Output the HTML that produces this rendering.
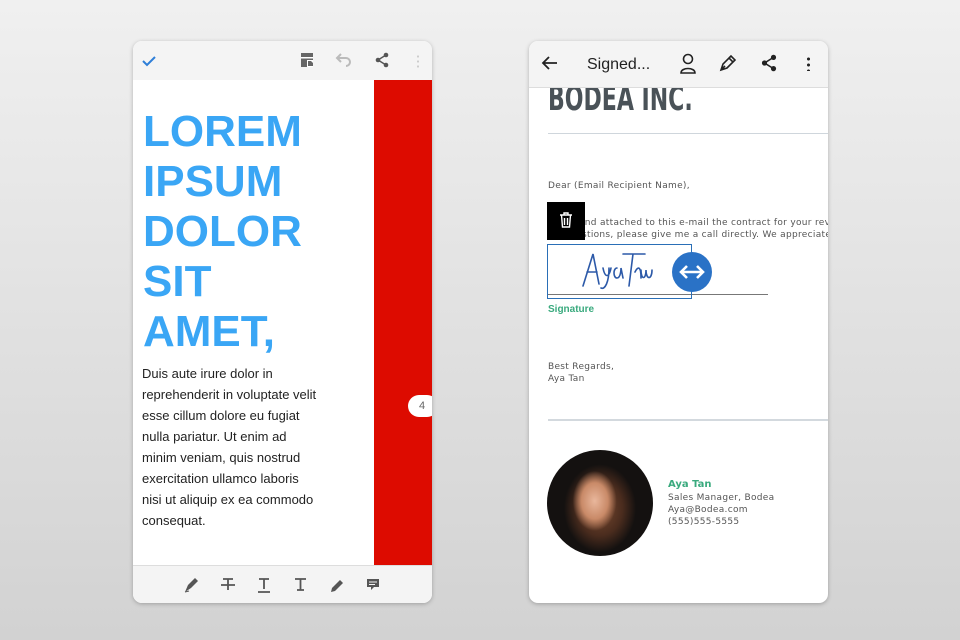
<!DOCTYPE html>
<html><head><meta charset="utf-8"><style>
*{margin:0;padding:0;box-sizing:border-box}
body{width:960px;height:640px;overflow:hidden;background:linear-gradient(#f0f0f0,#d2d2d2);font-family:"Liberation Sans",sans-serif;position:relative}
.ph{position:absolute;top:41px;width:299px;height:562px;background:#fff;border-radius:9px;overflow:hidden;box-shadow:0 1px 4px rgba(0,0,0,.25)}
.abs{position:absolute}
.h{color:#3aa6f5;font-weight:bold;font-size:44px;line-height:50px;letter-spacing:0px;font-family:"Liberation Sans",sans-serif}
.bt{font-size:13px;line-height:21px;color:#222;white-space:nowrap}
.t{font-family:"DejaVu Sans",sans-serif;font-size:9px;color:#555;letter-spacing:.3px}
</style></head><body>
<div class="ph" style="left:133px">
 <div class="abs" style="left:0;top:0;width:299px;height:39px;background:#f4f4f4"></div>
 <svg class="abs" style="left:8px;top:12px" width="16" height="16" viewBox="0 0 16 16"><path d="M2 8l4 4 8-8" stroke="#2f7fd8" stroke-width="2" fill="none"/></svg>
 <svg class="abs" style="left:166px;top:10px" width="18" height="18" viewBox="0 0 18 18"><rect x="2" y="2" width="12" height="14" fill="#666"/><rect x="2" y="6" width="12" height="1.5" fill="#fff"/><path d="M8 9h6v7h-6z" fill="#fff"/><path d="M9 10h3l2 2v3h-5z" fill="#666"/></svg>
 <svg class="abs" style="left:201px;top:11px" width="20" height="18" viewBox="0 0 20 18"><path d="M4 6h8a4 4 0 0 1 0 8" stroke="#bbb" stroke-width="2" fill="none"/><path d="M7 2L3 6l4 4" stroke="#bbb" stroke-width="2" fill="none"/></svg>
 <svg class="abs" style="left:241px;top:11px" width="16" height="16" viewBox="0 0 16 16"><circle cx="12" cy="3" r="2.3" fill="#555"/><circle cx="4" cy="8" r="2.3" fill="#555"/><circle cx="12" cy="13" r="2.3" fill="#555"/><path d="M12 3L4 8l8 5" stroke="#555" stroke-width="1.4" fill="none"/></svg>
 <div class="abs" style="left:284px;top:13px;width:2px;height:14px;background:radial-gradient(circle,#ccc 1px,transparent 1.2px) 0 0/2px 5px"></div>
 <div class="abs" style="left:241px;top:39px;width:58px;height:485px;background:#dd0b00"></div>
 <div class="abs" style="left:275px;top:354px;width:30px;height:22px;background:#fff;border-radius:11px;color:#666;font-size:11px;line-height:22px;padding-left:11px">4</div>
 <div class="abs h" style="left:10px;top:66px">LOREM<br>IPSUM<br>DOLOR<br>SIT<br>AMET,</div>
 <div class="abs bt" style="left:9px;top:322px">Duis aute irure dolor in<br>reprehenderit in voluptate velit<br>esse cillum dolore eu fugiat<br>nulla pariatur. Ut enim ad<br>minim veniam, quis nostrud<br>exercitation ullamco laboris<br>nisi ut aliquip ex ea commodo<br>consequat.</div>
 <div class="abs" style="left:0;top:524px;width:299px;height:38px;background:#f4f4f4;border-top:1px solid #ddd"></div>
 <svg class="abs" style="left:0;top:524px" width="299" height="38" viewBox="0 0 299 38">
  <g fill="#555" stroke="#555">
   <path d="M52 27l3-7 7-7 3 3-7 7z" stroke="none"/><path d="M52 27l4-1" stroke-width="1"/>
   <path d="M90 14h10M95 14v11M88 20h14" stroke-width="1.8" fill="none"/>
   <path d="M126 14h10M131 14v10M125 27h12" stroke-width="1.8" fill="none"/>
   <path d="M162 14h11M167.5 14v11M164 25h7" stroke-width="1.8" fill="none"/>
   <path d="M198 27l1-4 8-8 3 3-8 8z" stroke="none"/>
   <path d="M234 14h12v8h-5l-3 3v-3h-4z" stroke="none"/>
  </g>
  <path d="M236 17h8M236 19.5h6" stroke="#f4f4f4"/>
 </svg>
</div>
<div class="ph" style="left:529px">
 <div class="abs" style="left:19px;top:38px;font-size:34px;font-weight:bold;color:#4a5258;font-family:'DejaVu Sans Condensed',sans-serif;transform:scaleX(.72);transform-origin:left;line-height:40px">BODEA INC.</div>
 <div class="abs" style="left:0;top:0;width:299px;height:47px;background:#f4f4f4;border-bottom:1px solid #ddd"></div>
 <svg class="abs" style="left:12px;top:14px" width="18" height="16" viewBox="0 0 18 16"><path d="M16 8H3M8 2L2 8l6 6" stroke="#222" stroke-width="1.8" fill="none"/></svg>
 <div class="abs" style="left:58px;top:15px;font-size:16px;color:#222">Signed...</div>
 <svg class="abs" style="left:150px;top:12px" width="18" height="22" viewBox="0 0 18 22"><circle cx="9" cy="6" r="4.5" stroke="#222" stroke-width="1.6" fill="none"/><path d="M2 20c0-6 14-6 14 0z" stroke="#222" stroke-width="1.6" fill="none"/></svg>
 <svg class="abs" style="left:190px;top:13px" width="18" height="18" viewBox="0 0 18 18"><path d="M2 16l2-6 6-6 4 4-6 6z M10 4l2-2 4 4-2 2 M2 16l4-4" stroke="#222" stroke-width="1.6" fill="none"/></svg>
 <svg class="abs" style="left:231px;top:13px" width="18" height="18" viewBox="0 0 16 16"><circle cx="12" cy="3" r="2.3" fill="#222"/><circle cx="4" cy="8" r="2.3" fill="#222"/><circle cx="12" cy="13" r="2.3" fill="#222"/><path d="M12 3L4 8l8 5" stroke="#222" stroke-width="1.4" fill="none"/></svg>
 <div class="abs" style="left:278px;top:15px;width:3px;height:15px;background:radial-gradient(circle,#222 1.4px,transparent 1.6px) 0 0/3px 6px"></div>
 <div class="abs" style="left:19px;top:92px;width:280px;height:1px;background:#cfd6dc"></div>
 <div class="abs t" style="left:19px;top:140px">Dear (Email Recipient Name),</div>
 <div class="abs t" style="left:19px;top:176px;line-height:12px;white-space:nowrap;padding-left:34px">ind attached to this e-mail the contract for your rev<br>stions, please give me a call directly. We appreciate</div>
 <div class="abs" style="left:18px;top:161px;width:38px;height:38px;background:#000"></div>
 <svg class="abs" style="left:29px;top:170px" width="16" height="18" viewBox="0 0 16 18"><path d="M2 4h12M6 4V2h4v2M3.5 4l1 12h7l1-12M6.5 7v7M9.5 7v7" stroke="#fff" stroke-width="1.4" fill="none"/></svg>
 <div class="abs" style="left:19px;top:253px;width:220px;height:1px;background:#777"></div>
 <div class="abs" style="left:18px;top:203px;width:145px;height:55px;border:1.5px solid #2a6fb7"></div>
 <svg class="abs" style="left:50px;top:205px" width="80" height="48" viewBox="0 0 80 48"><path d="M4 40L14 8l6 30M8 26h10M24 22c2 10 6 10 8 0M30 22c0 14-4 22-8 20M38 22c-4 0-4 10 0 10s4-10 4-10l2 10M44 8h22M54 8l-4 32M56 26c3-6 6-6 6 6M62 24c0 10 5 10 5 0 0 10 6 10 6 0" stroke="#2c59a8" stroke-width="1.6" fill="none" stroke-linecap="round"/></svg>
 <div class="abs" style="left:143px;top:211px;width:40px;height:40px;border-radius:50%;background:#2a72c6"></div>
 <svg class="abs" style="left:149px;top:221px" width="28" height="20" viewBox="0 0 28 20"><path d="M3 10h22M9 4l-6 6 6 6M19 4l6 6-6 6" stroke="#fff" stroke-width="2.6" fill="none"/></svg>
 <div class="abs" style="left:19px;top:263px;font-size:10px;font-weight:bold;color:#3aaa7e">Signature</div>
 <div class="abs t" style="left:19px;top:320px;line-height:12px">Best Regards,<br>Aya Tan</div>
 <div class="abs" style="left:19px;top:378px;width:280px;height:2px;background:#d3d9de"></div>
 <div class="abs" style="left:18px;top:409px;width:106px;height:106px;border-radius:50%;background:radial-gradient(ellipse 22px 30px at 45% 48%,#e9b79c 0,#c98a68 60%,transparent 100%),radial-gradient(ellipse 45px 55px at 50% 55%,#7a4a30 0,#4a2c1e 50%,transparent 80%),#141110"></div>
 <div class="abs" style="left:139px;top:438px;font-size:10px;font-weight:bold;color:#3aaa7e;font-family:'DejaVu Sans',sans-serif">Aya Tan</div>
 <div class="abs t" style="left:139px;top:451px;line-height:12px">Sales Manager, Bodea<br>Aya@Bodea.com<br>(555)555-5555</div>
</div>
</body></html>
